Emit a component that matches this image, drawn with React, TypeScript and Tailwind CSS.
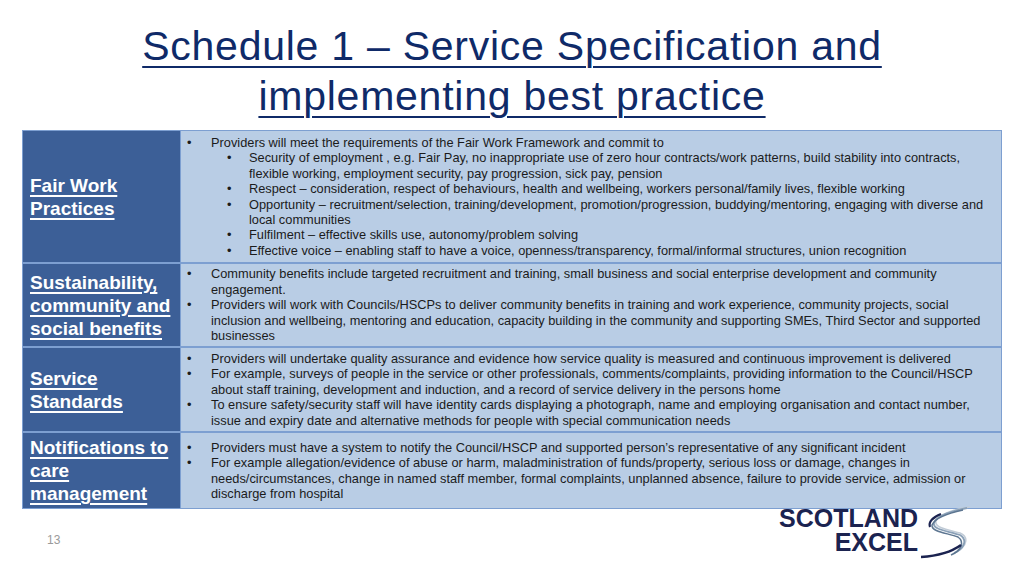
import React from "react";

type Item = { text: string; sub?: string[] };

const rows: { label: string; h: string; items: Item[] }[] = [
  {
    label: "Fair Work Practices",
    h: "h-[131px]",
    items: [
      {
        text: "Providers will meet the requirements of the Fair Work Framework and commit to",
        sub: [
          "Security of employment , e.g. Fair Pay, no inappropriate use of zero hour contracts/work patterns, build stability into contracts, flexible working, employment security, pay progression, sick pay, pension",
          "Respect – consideration, respect of behaviours, health and wellbeing, workers personal/family lives, flexible working",
          "Opportunity – recruitment/selection, training/development, promotion/progression, buddying/mentoring, engaging with diverse and local communities",
          "Fulfilment – effective skills use, autonomy/problem solving",
          "Effective voice – enabling staff to have a voice, openness/transparency, formal/informal structures, union recognition",
        ],
      },
    ],
  },
  {
    label: "Sustainability, community and social benefits",
    h: "h-[84px]",
    items: [
      {
        text: "Community benefits include targeted recruitment and training, small business and social enterprise development and community engagement.",
      },
      {
        text: "Providers will work with Councils/HSCPs to deliver community benefits in training and work experience, community projects, social inclusion and wellbeing, mentoring and education, capacity building in the community and supporting SMEs, Third Sector and supported businesses",
      },
    ],
  },
  {
    label: "Service Standards",
    h: "h-[85px]",
    items: [
      {
        text: "Providers will undertake quality assurance and evidence how service quality is measured and continuous improvement is delivered",
      },
      {
        text: "For example, surveys of people in the service or other professionals, comments/complaints, providing information to the Council/HSCP about staff training, development and induction, and a record of service delivery in the persons home",
      },
      {
        text: "To ensure safety/security staff will have identity cards displaying a photograph, name and employing organisation and contact number, issue and expiry date and alternative methods for people with special communication needs",
      },
    ],
  },
  {
    label: "Notifications to care management",
    h: "h-[77px]",
    items: [
      {
        text: "Providers must have a system to notify the Council/HSCP and supported person’s representative of any significant incident",
      },
      {
        text: "For example allegation/evidence of abuse or harm, maladministration of funds/property, serious loss or damage, changes in needs/circumstances, change in named staff member, formal complaints, unplanned absence, failure to provide service, admission or discharge from hospital",
      },
    ],
  },
];

function Bullet({ children, sub }: { children: React.ReactNode; sub?: boolean }) {
  return (
    <div className={`flex ${sub ? "ml-[40px]" : ""}`}>
      <span className={`shrink-0 ${sub ? "w-[22px]" : "w-[24px]"}`}>•</span>
      <span>{children}</span>
    </div>
  );
}

// ribbon swirl next to the logo type
function Swirl() {
  return (
    <svg width="56" height="56" viewBox="0 0 56 56" className="-ml-[2px] -mt-[1px] shrink-0">
      <path d="M54 2 C39 4 23 9 20 16 C18 23 33 25 44 28 C53 32 51 41 41 46" fill="none" stroke="#c2ccd7" strokeWidth="1.6" />
      <path d="M51 3 C36 6 20 11 18 18 C16 25 33 26 44 30 C52 35 48 44 38 48" fill="none" stroke="#8aa0b7" strokeWidth="1.8" />
      <path d="M47 5 C33 8 19 13 16 20 C15 27 32 28 42 32 C49 37 45 46 35 50" fill="none" stroke="#5d7691" strokeWidth="1.5" />
      <path d="M25 9 C17 12 12 17 14 22" fill="none" stroke="#1b2350" strokeWidth="2.2" />
      <path d="M5 52 C20 51 34 48 45 40" fill="none" stroke="#1b2350" strokeWidth="2.4" />
    </svg>
  );
}

export default function App() {
  return (
    <div className="relative h-[576px] w-[1024px] overflow-hidden bg-white font-['Liberation_Sans',Arial,sans-serif]">
      <h1 className="pt-[21px] text-center text-[41px] leading-[50px] tracking-[0.75px] text-[#0f2a68] underline decoration-2 underline-offset-[6px]">
        Schedule 1 – Service Specification and
        <br />
        implementing best practice
      </h1>

      <div className="mx-[22px] mt-[9px] border border-[#7d9fd1]">
        {rows.map((r, i) => (
          <div key={r.label} className={`flex ${r.h} ${i > 0 ? "border-t-2 border-[#7d9fd1]" : ""}`}>
            <div className="flex w-[158px] shrink-0 items-center border-r border-[#7d9fd1] bg-[#3c5f97] pl-[7px] pr-[3px]">
              <span className="text-[19px] font-bold leading-[23px] text-white underline decoration-[1.5px] underline-offset-[3px]">
                {r.label}
              </span>
            </div>
            <div className="flex flex-1 items-center bg-[#b9cde5] pl-[6px] pr-[14px] text-[12.8px] leading-[15.4px] text-[#1b1b1b]">
              <div>
                {r.items.map((it) => (
                  <div key={it.text}>
                    <Bullet>{it.text}</Bullet>
                    {it.sub?.map((s) => (
                      <Bullet key={s} sub>
                        {s}
                      </Bullet>
                    ))}
                  </div>
                ))}
              </div>
            </div>
          </div>
        ))}
      </div>

      <div className="flex items-start justify-between pl-[47px] pr-[52px]">
        <span className="mt-[22px] text-[12px] text-[#9a9a9a]">13</span>
        <div className="-mt-[3px] flex items-start">
          <div className="flex flex-col items-end text-[25px] font-bold leading-[24px] text-[#1b2350]">
            <span>SCOTLAND</span>
            <span>EXCEL</span>
          </div>
          <Swirl />
        </div>
      </div>
    </div>
  );
}
